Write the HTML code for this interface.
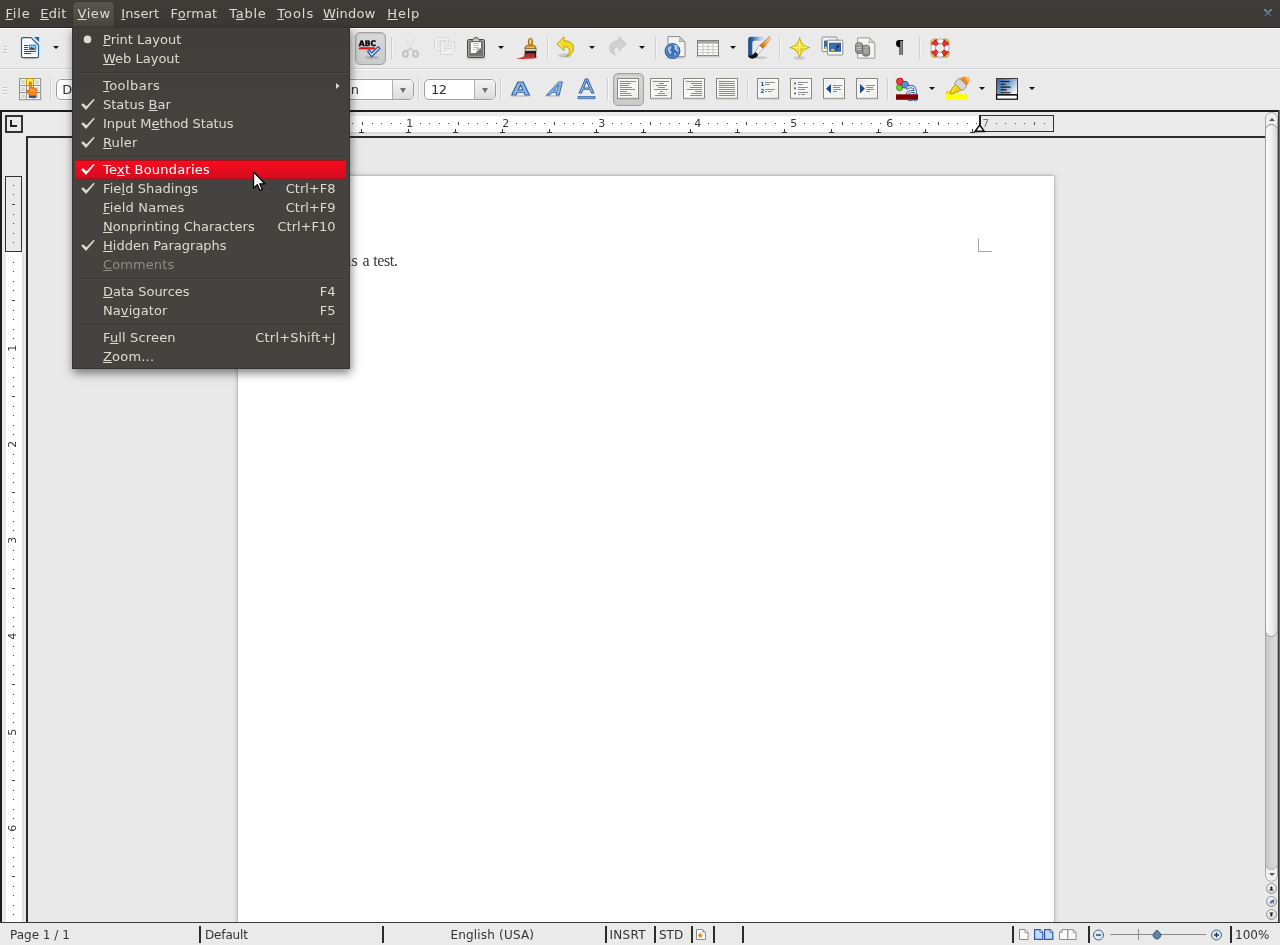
<!DOCTYPE html>
<html lang="en">
<head>
<meta charset="utf-8">
<title>Untitled 1 - LibreOffice Writer</title>
<style>
html,body{margin:0;padding:0;}
body{width:1280px;height:945px;overflow:hidden;position:relative;background:#eaeaea;font-family:"DejaVu Sans","Liberation Sans",sans-serif;font-size:13px;color:#2e2e2e;}
.abs{position:absolute;}
#menu,#menubar,#status,#tb1,#tb2,#page,#frame svg{will-change:transform;}
svg{position:absolute;overflow:visible;}
u{text-decoration:underline;text-underline-offset:0.500px;text-decoration-thickness:1px;}
/* menubar */
#menubar{position:absolute;left:0;top:0;width:1280px;height:28px;box-sizing:border-box;border-bottom:1px solid #2a2925;background:linear-gradient(#3f3e3a,#3c3b37 30%,#3b3a36);}
#menubar span.mi{position:absolute;top:6px;color:#dfdbd2;white-space:nowrap;line-height:16px;}
#viewsel{position:absolute;left:73px;top:2px;width:41px;height:26px;border-radius:4px 4px 0 0;background:linear-gradient(#56554f,#47463f);box-shadow:0 0 0 1px rgba(48,47,43,.45);}
/* toolbars */
#tb1{position:absolute;left:0;top:27px;width:1280px;height:42px;}
#tbtop{position:absolute;left:0;top:28px;width:1280px;height:1px;background:#fcfcfc;}
#tb2{position:absolute;left:0;top:69px;width:1280px;height:41px;}
#tbline{position:absolute;left:0;top:68px;width:1280px;height:1px;background:#d2d2d2;border-bottom:1px solid #f7f7f7;}
.grip{position:absolute;left:3px;width:4px;height:1px;background:#c3c3c3;box-shadow:0 1px 0 #fafafa;}
.tsep{position:absolute;width:1px;height:22px;background:#cfcfcf;box-shadow:1px 0 0 #f6f6f6;}
.pressed{position:absolute;width:31px;height:33px;box-sizing:border-box;border:1px solid #a3a3a3;border-radius:5px;background:linear-gradient(#d9d9d9,#cbcbcb);box-shadow:inset 0 1px 2px rgba(0,0,0,.12);}
.dd{position:absolute;width:0;height:0;margin-left:.4px;border-left:3.100px solid transparent;border-right:3.100px solid transparent;border-top:3.600px solid #111;}
.combo{position:absolute;top:79px;height:21px;box-sizing:border-box;border:1px solid #9e9e9e;border-radius:5px;background:#fff;box-shadow:0 0 0 1px #f1f1f1;}
.combo .btn{position:absolute;right:0;top:0;bottom:0;width:20px;border-left:1px solid #b0b0b0;background:linear-gradient(#f3f3f3,#dcdcdc);border-radius:0 4px 4px 0;}
.combo .btn:after{content:"";position:absolute;left:6.500px;top:8px;border-left:3.700px solid transparent;border-right:3.700px solid transparent;border-top:5px solid #707070;}
.combo .tx{position:absolute;left:6px;top:2px;line-height:16px;color:#333;white-space:nowrap;}
/* doc frame */
#frame{position:absolute;left:0;top:110px;width:1280px;height:813px;background:#eaeaea;}
#frame .bt{position:absolute;left:0;top:0;width:1280px;height:2px;background:#1c1c1c;}
#frame .bl{position:absolute;left:0;top:0;width:2px;height:812px;background:#1c1c1c;}
#frame .br{position:absolute;left:1278px;top:0;width:2px;height:813px;background:linear-gradient(90deg,#3a3a3a 50%,#6e6e6e 50%);}
#frame .bb{position:absolute;left:0;top:812px;width:1280px;height:1px;background:#3a3a3a;}
#view{position:absolute;left:26px;top:26px;width:1239px;height:786px;background:#e9e9e9;border-left:2px solid #2b2b2b;border-top:2px solid #2b2b2b;box-sizing:border-box;overflow:hidden;}
#page{position:absolute;left:210px;top:38px;width:816px;height:1056px;background:#fff;box-shadow:0 0 0 1px rgba(0,0,0,.08),0 0 5px rgba(0,0,0,.28);}
#doctext{position:absolute;left:75px;top:76px;font-family:"Liberation Serif",serif;font-size:16px;line-height:18px;color:#383838;white-space:nowrap;}
/* status bar */
#status{position:absolute;left:0;top:923px;width:1280px;height:22px;background:#eaeaea;font-size:12px;}
#status .t{position:absolute;top:5px;line-height:15px;color:#333;white-space:nowrap;}
#status .sep{position:absolute;top:3px;width:2px;height:17px;background:#2b2b2b;}
/* popup menu */
#menu{position:absolute;left:72px;top:27px;width:278px;height:342px;background:linear-gradient(#413f3b,#444340 30%,#444340);box-shadow:1px 4px 9px rgba(0,0,0,.5), 0 0 0 1px rgba(44,43,40,.6) inset;color:#dfdbd2;}
#menu .it{position:absolute;left:3px;width:271px;height:19px;line-height:19px;white-space:nowrap;}
#menu .it .l{position:absolute;left:28px;top:0;}
#menu .it .r{position:absolute;right:10.500px;top:0;}
#menu .it.dis{color:#8d8b85;}
#menu .it.hl{background:linear-gradient(#fb0a1d,#d30d20);box-shadow:0 1px 0 #a8121f inset, 0 -1px 0 #b00d1d inset;color:#fff;}
#menu .sepm{position:absolute;left:3px;width:272px;height:1px;background:#3a3935;border-bottom:1px solid #4d4c47;}
#menu svg.ck{left:6px;top:4px;}
</style>
</head>
<body>

<div id="tbtop"></div>
<div id="tb1">
  <div class="grip" style="top:19px"></div><div class="grip" style="top:22px"></div><div class="grip" style="top:25px"></div>
  <!-- new writer document -->
  <svg style="left:21px;top:10px" width="19" height="22" viewBox="0 0 19 22">
    <ellipse cx="9.500" cy="21.400" rx="6" ry="1" fill="#5a3a2a" opacity=".14"/>
    <path d="M1.700 .6h8.300l7.500 7.400v11.400a1.200 1.200 0 0 1-1.200 1.200H1.700a1.200 1.200 0 0 1-1.200-1.200V1.800A1.200 1.200 0 0 1 1.700 .6z" fill="#fdfdfd" stroke="#18659d" stroke-width="1.200" stroke-linejoin="round"/>
    <path d="M13.100 0H18.100V4.900z" fill="#1b6aa3"/>
    <path d="M3 8.500h3.900M3 10.500h3.900M3 12.500h3.900M3 14.500h11.900M3 16.500h6.900" stroke="#12548a" stroke-width="1.100"/>
    <path d="M9.900 16.500h5" stroke="#d9dcde" stroke-width="1.100"/>
    <rect x="8.300" y="8.200" width="6.500" height="4.500" fill="#9fd6f7" stroke="#1a80d0" stroke-width="1.100"/>
    <path d="M9 12.200l1.300-2.600.8 1.400 1-.8 1.900 2z" fill="#4a3426"/>
  </svg>
  <div class="dd" style="left:53px;top:19px"></div>
  <!-- autospellcheck pressed -->
  <div class="pressed" style="left:355px;top:5px"></div>
  <svg style="left:358px;top:11px" width="25" height="22" viewBox="0 0 25 22">
    <ellipse cx="14" cy="19.5" rx="7" ry="1.6" fill="#000" opacity=".15"/>
    <text x="0.8" y="7.700" font-family="DejaVu Sans, Liberation Sans, sans-serif" font-weight="bold" font-size="7.700" fill="#000" stroke="#000" stroke-width=".35" textLength="17.200" lengthAdjust="spacingAndGlyphs">ABC</text>
    <path d="M1 9.600l1 1.400 1-1.400 1 1.400 1-1.400 1 1.400 1-1.400 1 1.400 1-1.400 1 1.400 1-1.400 1 1.400 1-1.400 1 1.400 1-1.400 1 1.400 1-1.400" fill="none" stroke="#e01010" stroke-width="1.300"/>
    <path d="M9.6 13.4l1.8-1.6 2.2 3.2 6.6-6.4 1.8 1.8-8.4 8.4z" fill="#c9dcf3" stroke="#1c4f9f" stroke-width="1.1" stroke-linejoin="round"/>
  </svg>
  <div class="tsep" style="left:391px;top:10px"></div>
  <!-- cut disabled -->
  <svg style="left:401px;top:9px" width="19" height="22" viewBox="0 0 19 22">
    <path d="M4.500 1l5 11.500M14.500 1l-5 11.500" fill="none" stroke="#dadada" stroke-width="1"/>
    <path d="M6.300 14.800l3.200-2.300 3.200 2.300" fill="none" stroke="#c9c9c9" stroke-width="1.600"/>
    <g fill="none" stroke="#c2c2c2" stroke-width="2">
      <ellipse cx="4.400" cy="17.900" rx="2.400" ry="2.900"/><ellipse cx="14.500" cy="17.900" rx="2.400" ry="2.900"/>
    </g>
  </svg>
  <!-- copy disabled -->
  <svg style="left:434px;top:10px" width="22" height="19" viewBox="0 0 22 19">
    <rect x=".5" y=".5" width="14" height="13" rx="1" fill="#efefef" stroke="#d6d6d6"/>
    <path d="M3 3.500h9M3 5.500h9M3 7.500h9M3 9.500h9" stroke="#dbdbdb"/>
    <path d="M6.5 4.8h14v9.2l-3.6 3.6H6.5z" fill="#f0f0f0" stroke="#d4d4d4" stroke-linejoin="round"/>
    <path d="M9 7.500h9M9 9.500h9M9 11.500h9M9 13.500h4" stroke="#d9d9d9"/>
  </svg>
  <!-- paste -->
  <svg style="left:466px;top:10px" width="20" height="23" viewBox="0 0 20 23">
    <defs><linearGradient id="gpb" x1="0" y1="0" x2="0" y2="1"><stop offset="0" stop-color="#8d8f8a"/><stop offset="1" stop-color="#5e605b"/></linearGradient>
    <linearGradient id="gpf" x1="0" y1="0" x2="1" y2="1"><stop offset="0" stop-color="#f2f2f0"/><stop offset=".6" stop-color="#9a9c97"/><stop offset="1" stop-color="#6a6c67"/></linearGradient></defs>
    <ellipse cx="10" cy="21.300" rx="10" ry="1.500" fill="#000" opacity=".13"/>
    <rect x="1.500" y="2.500" width="17" height="18" rx="1.700" fill="url(#gpb)" stroke="#454743" stroke-width="1"/>
    <rect x="2.600" y="3.600" width="14.800" height="15.800" rx=".6" fill="#72746f" stroke="#b7b9b3" stroke-width=".8"/>
    <path d="M4.800 4.700H15v6.800l-5 4.500H4.800z" fill="#fff"/>
    <path d="M10 11.500h5V16h-5z" fill="#6c6e69"/>
    <path d="M10 11.500h5L10 16z" fill="url(#gpf)"/>
    <path d="M7 6.500h5.800M7 8.500h5.800M7 10.500h5.800M7 12.500h1.700" stroke="#b3b3af" stroke-width=".9"/>
    <path d="M5.600 4.600c0-1.500 1.700-1.900 2.200-3c.3-.8.700-1.100 1.500-1.100h1.400c.8 0 1.200.3 1.500 1.100c.5 1.100 2.200 1.500 2.200 3z" fill="#babcb3" stroke="#454743" stroke-width=".9" stroke-linejoin="round"/>
    <path d="M7.400 3.700h5.200" stroke="#d6d7cf" stroke-width=".9"/>
  </svg>
  <div class="dd" style="left:498px;top:19px"></div>
  <!-- clone formatting brush -->
  <svg style="left:515px;top:10px" width="23" height="23" viewBox="0 0 23 23">
    <ellipse cx="17" cy="20.600" rx="6.500" ry="1.300" fill="#000" opacity=".12"/>
    <path d="M1 21.500c4.500-.6 7-1.300 8.600-2.600l11.600.6v1.200c-6 .9-14.500 1.700-20.200.8z" fill="#e01b24"/>
    <path d="M9.900 14h11.300v6.400l-11.800-.4z" fill="#161616"/>
    <path d="M9.700 17.200l1.200-1 .8 1 1.300-1.600 1 1.400 1.200-1.500 1 1.600 1.300-1.400 1 1.300 1.400-1.200.3 5.800-11.700-.3z" fill="#d5383d" opacity=".78"/>
    <rect x="10" y="11.300" width="11.100" height="2.700" fill="#dcded8" stroke="#4e4e4a" stroke-width=".7"/>
    <path d="M10.100 11.200c-.3-2.500 1.600-2.900 4-3.100h2.800c2.400.2 4.300.6 4 3.100z" fill="#d79a2f" stroke="#8f5902" stroke-width=".8" stroke-linejoin="round"/>
    <ellipse cx="15.500" cy="4.900" rx="2.200" ry="3.600" fill="#d79a2f" stroke="#8f5902" stroke-width=".8"/>
    <ellipse cx="15.500" cy="4.400" rx=".9" ry="2.400" fill="#f3d48a"/>
    <path d="M11.300 10.300h8.400" stroke="#f0c870" stroke-width=".9"/>
  </svg>
  <div class="tsep" style="left:547px;top:10px"></div>
  <!-- undo -->
  <svg style="left:556px;top:9px" width="19" height="22" viewBox="0 0 19 22">
    <ellipse cx="9" cy="19.6" rx="7" ry="2" fill="#000" opacity=".15"/>
    <path d="M8 .8L.9 8l7.100 6.600v-3.800c3.200-.4 5.400 1 5.400 4c0 2.200-1.400 4.200-4 5.800c5.400-1 8.200-4.600 8.200-8.400c0-4.400-3.600-7.600-9.600-7.400z" fill="#ecd928" stroke="#bf9f00" stroke-width="1" stroke-linejoin="round"/>
    <path d="M7.200 3.200L2.400 8l4.800 4.400" fill="none" stroke="#f8ee8a" stroke-width=".9"/>
  </svg>
  <div class="dd" style="left:589px;top:19px"></div>
  <!-- redo disabled -->
  <svg style="left:609px;top:9px" width="18" height="20" viewBox="0 0 18 20">
    <path d="M10 .8l7.100 7.200-7.100 6.600v-3.800c-3.200-.4-5.400 1-5.400 4c0 1.600.6 2.800 1.800 4c-3.600-1-5.600-3.600-5.600-6.600c0-4.400 3.400-7.600 9.200-7.400z" fill="#d2d2d2" stroke="#c3c3c3" stroke-width="1" stroke-linejoin="round"/>
  </svg>
  <div class="dd" style="left:639px;top:19px"></div>
  <div class="tsep" style="left:655px;top:10px"></div>
  <!-- hyperlink -->
  <svg style="left:664px;top:9px" width="22" height="23" viewBox="0 0 22 23">
    <ellipse cx="11" cy="22" rx="10" ry="1.2" fill="#000" opacity=".15"/>
    <path d="M4 .6h11.600l5.400 5.400v14.600H4z" fill="#f4f4f2" stroke="#8d8f8a" stroke-width="1" stroke-linejoin="round"/>
    <path d="M15.600 .6c.6 2 .2 3.800-.4 5.200c1.600-.6 4-.6 5.800.2z" fill="#d0d0cc" stroke="#8d8f8a" stroke-width=".8" stroke-linejoin="round"/>
    <circle cx="8.500" cy="15" r="7.400" fill="#3b70b8" stroke="#204a87" stroke-width="1"/>
    <circle cx="8.500" cy="15" r="6.400" fill="none" stroke="#7ea5dc" stroke-width=".8"/>
    <path transform="translate(.2 .7)" d="M3.600 11.400c1-1.600 2.600-2 3.600-1.400c.6 1-.4 2-1.400 2.600c-.2 1.400 1.400 1.800 1.600 3.200c-.6 1.600-1.400 2-2.200 1.200c-.2-1.600-1.800-2.800-1.600-5.600zM9.600 8.600c1.400-.6 3.400-.2 4.400 1c-.8.600-1.400 1.400-1 2.400c1 .4 1.600 1.400 1.200 2.600c-1 .8-2 .2-2.400-1c-1.200-.4-2-1.200-1.600-2.400c.6-.8 0-1.800-.6-2.600zM10.400 16.600c.8-.4 1.600 0 1.600 1c-.4 1-1.200 1.400-2 1c-.2-.8 0-1.600.4-2z" fill="#c6d7ef" opacity=".85"/>
  </svg>
  <!-- table -->
  <svg style="left:696px;top:12px" width="24" height="19" viewBox="0 0 24 19">
    <rect x="0" y="17" width="24" height="1.400" fill="#000" opacity=".13"/>
    <rect x="1.500" y="1.500" width="21" height="15" fill="#fbfbfa" stroke="#7f817c" stroke-width="1"/>
    <rect x="2" y="2" width="20" height="2.600" fill="#a4a6a0"/>
    <path d="M2 7.600h20M2 10.600h20M2 13.600h20M7 4.600v12M12 4.600v12M17 4.600v12" stroke="#c6c8c2" stroke-width="1"/>
  </svg>
  <div class="dd" style="left:730px;top:19px"></div>
  <!-- show draw functions -->
  <svg style="left:747px;top:9px" width="26" height="24" viewBox="0 0 26 24">
    <defs><linearGradient id="gdf" x1="0" y1="0" x2="1" y2="0"><stop offset="0" stop-color="#1d4482"/><stop offset=".22" stop-color="#2f62a8"/><stop offset=".5" stop-color="#6f9bd0" stop-opacity=".85"/><stop offset="1" stop-color="#c9d9ec" stop-opacity="0"/></linearGradient>
    <linearGradient id="gdh" x1="0" y1="1" x2="1" y2="0"><stop offset="0" stop-color="#b4560c"/><stop offset=".35" stop-color="#e8872a"/><stop offset="1" stop-color="#f4b070" stop-opacity=".15"/></linearGradient></defs>
    <ellipse cx="14" cy="21.600" rx="6" ry="1.100" fill="#000" opacity=".16"/>
    <path d="M3.800 .8H19.500V5H7.200a1.600 1.600 0 0 0-1.600 1.600V21H1.200V3.400A2.600 2.600 0 0 1 3.800 .8z" fill="url(#gdf)"/>
    <path d="M5.800 18V6.800a1.700 1.700 0 0 1 1.700-1.700H17" fill="none" stroke="#f6f6f6" stroke-width=".7" opacity=".8"/>
    <path d="M12.300 9.700L23.600 -.4 24.800 3 16.200 12.800z" fill="url(#gdh)"/>
    <path d="M12.600 9.600L23 .2" stroke="#8a4a12" stroke-width=".7" opacity=".7" fill="none"/>
    <path d="M8.300 16L12.300 9.500 16.200 12.700 11 18.600z" fill="#fbfbfb" stroke="#8a8a86" stroke-width=".6" stroke-linejoin="round"/>
    <path d="M10 15.600l3.200-4M11.400 16.600l3.200-4" stroke="#c9c9c5" stroke-width=".5"/>
    <path d="M8.300 16l2.800 2.600c-.4 2.800-3.600 4.400-6.800 4c-1.800-.3-2.900-1.400-3-3c2.600.6 5-.8 7-3.600z" fill="#141414"/>
  </svg>
  <div class="tsep" style="left:779px;top:10px"></div>
  <!-- navigator star -->
  <svg style="left:789px;top:9.800px" width="22" height="23" viewBox="0 0 22 23">
    <ellipse cx="10.600" cy="21" rx="6" ry="1.600" fill="#000" opacity=".14"/>
    <path d="M10.600 .7C11.900 6.600 14.600 9.300 20.500 10.600C14.600 11.900 11.900 14.600 10.600 20.500C9.300 14.600 6.600 11.900 .7 10.600C6.600 9.300 9.300 6.600 10.600 .7z" fill="#f2e43c" stroke="#c4a000" stroke-width="1" stroke-linejoin="round"/>
    <path d="M10.600 3.600v14M3.600 10.600h14" stroke="#fdf8b0" stroke-width="1"/>
    <path d="M10.600 10.600l5 0-5 5z" fill="#d9c21a" opacity=".6"/>
  </svg>
  <!-- gallery -->
  <svg style="left:821px;top:9px" width="23" height="20" viewBox="0 0 23 20">
    <rect x="1" y="1" width="15" height="14.600" rx="1" fill="#f3f3f1" stroke="#8d8f8a" stroke-width="1"/>
    <rect x="3" y="4.600" width="5" height="8" fill="#3465a4"/>
    <path d="M3 12.600l1.800-2.600 1.600 2.600z" fill="#f4d21f"/>
    <rect x="6.400" y="4.200" width="15.400" height="14.800" rx="1" fill="#f5f5f3" stroke="#8d8f8a" stroke-width="1"/>
    <rect x="8.600" y="7.200" width="11" height="8" fill="#3b6fb6" stroke="#204a87" stroke-width=".8"/>
    <path d="M9.400 14.800c1.200-2.200 2.800-2.600 4.600 0z" fill="#f4d21f"/>
    <path d="M14.200 10.600l2.600.6M16.400 9l.8 2.600M16.800 11.400l-2 3.200M18.200 8.600l-1 2.800" stroke="#14233a" stroke-width=".9" fill="none"/>
  </svg>
  <!-- data sources -->
  <svg style="left:855px;top:10px" width="21" height="23" viewBox="0 0 21 23">
    <path d="M2.600 .8h11.600l5.600 5.600v14.800H2.600z" fill="#f3f3f1" stroke="#9a9c97" stroke-width="1" stroke-linejoin="round"/>
    <path d="M14.200 .8c.6 2 .2 3.800-.4 5.200c1.600-.6 4-.6 5.800.2z" fill="#d9d9d5" stroke="#9a9c97" stroke-width=".8" stroke-linejoin="round"/>
    <g fill="#8f918c" stroke="#5c5e59" stroke-width=".8">
      <path d="M.6 7.600c0-2.600 7-2.600 7 0v7c0 2.600-7 2.600-7 0z"/>
      <path d="M7.400 10.200c0-2.600 7.200-2.600 7.200 0v7c0 2.600-7.200 2.600-7.200 0z"/>
    </g>
    <path d="M1.600 10.400h5M1.600 12.600h5M8.600 13h5M8.600 15.200h5" stroke="#c8cac4" stroke-width=".9"/>
    <ellipse cx="4.100" cy="7.400" rx="2.800" ry="1" fill="#a9aba6"/><ellipse cx="11" cy="10" rx="2.900" ry="1" fill="#a9aba6"/>
  </svg>
  <!-- nonprinting characters -->
  <svg style="left:895px;top:13px" width="8" height="17" viewBox="0 0 8 17">
    <text x="1" y="13.400" font-family="Liberation Serif, DejaVu Serif, serif" font-size="19" fill="#000" stroke="#000" stroke-width=".25" textLength="7.400" lengthAdjust="spacingAndGlyphs">¶</text>
  </svg>
  <div class="tsep" style="left:919px;top:10px"></div>
  <!-- help lifebuoy -->
  <svg style="left:930px;top:11px" width="20" height="20" viewBox="0 0 20 20">
    <ellipse cx="11" cy="19.300" rx="8" ry="1" fill="#000" opacity=".12"/>
    <g fill="none" stroke="#c4a000" stroke-width="1.300"><path d="M.8 6.400C.8 2.800 2.800 .8 6.400 .8"/><path d="M13.600 .8c3.600 0 5.600 2 5.600 5.600"/><path d="M19.200 13.600c0 3.600-2 5.600-5.600 5.600"/><path d="M6.400 19.200c-3.600 0-5.600-2-5.600-5.600"/></g>
    <circle cx="10" cy="10" r="9.100" fill="#fdfdfd" stroke="#a9a9a9" stroke-width=".9"/>
    <circle cx="10" cy="10" r="6.900" fill="none" stroke="#ee2b33" stroke-width="4.300" stroke-dasharray="5.420 5.420" stroke-dashoffset="-2.710"/>
    <circle cx="10" cy="10" r="9.100" fill="none" stroke="#a40000" stroke-width=".9" stroke-dasharray="7.147 7.147" stroke-dashoffset="-3.570"/>
    <circle cx="10" cy="10" r="4.500" fill="#eaeaea" stroke="#9a9a9a" stroke-width=".9"/>
    <circle cx="10" cy="10" r="4.500" fill="none" stroke="#a40000" stroke-width=".9" stroke-dasharray="3.534 3.534" stroke-dashoffset="-1.767"/>
  </svg>
</div>

<div id="tbline"></div>
<div id="tb2">
  <div class="grip" style="top:18px"></div><div class="grip" style="top:21px"></div><div class="grip" style="top:24px"></div>
  <!-- styles and formatting -->
  <svg style="left:19px;top:9px" width="22.200" height="22.200" viewBox="0 0 22.600 22.600">
    <rect x=".5" y=".5" width="21.600" height="21.600" fill="#f4f4f2" stroke="#8c8e89" stroke-width="1"/>
    <path d="M7.600 .5v21.600M14.800 .5v21.600M.5 7.600h21.600M.5 14.800h21.600" stroke="#8c8e89" stroke-width="1"/>
    <g fill="#d3d7cf"><rect x="2.200" y="2.200" width="3.800" height="3.800"/><rect x="16.400" y="2.200" width="3.800" height="3.800"/><rect x="2.200" y="9.400" width="3.800" height="3.800"/><rect x="16.400" y="9.400" width="3.800" height="3.800"/><rect x="2.200" y="16.600" width="3.800" height="3.800"/><rect x="16.400" y="16.600" width="3.800" height="3.800"/></g>
    <rect x="7.600" y=".5" width="7.200" height="7.200" fill="#fce94f" stroke="#c4a000" stroke-width="1"/>
    <rect x="10" y="17.600" width="7.600" height="2.600" fill="#204a87"/>
    <path d="M10.600 4.800c0-1.400 2-1.400 2 0v5.200c.4-.8 1.800-.6 1.800.4c.4-.8 1.800-.4 1.800.6c.6-.6 1.800-.2 1.800.8v3.600c0 1.600-1 2.600-2.400 2.600h-3.400c-1.200 0-2-.6-2.600-1.600l-1.600-3c-.4-1 .8-1.800 1.600-.8l1 1.200z" fill="#f5891f" stroke="#ce5c00" stroke-width=".7" stroke-linejoin="round"/>
    <path d="M12.600 11v3M14.400 11.400v2.600M16.200 12v2" stroke="#fcbf7a" stroke-width=".7"/>
  </svg>
  <div class="tsep" style="left:50px;top:9px"></div>
  <div class="combo" style="left:56px;top:10px;width:160px"><span class="tx" style="left:5.200px">Default</span></div>
  <div class="combo" style="left:230px;top:10px;width:184px"><span class="tx" style="left:auto;right:54px">Liberation Serif;Times New Roman</span><span class="btn"></span></div>
  <div class="tsep" style="left:418px;top:9px"></div>
  <div class="combo" style="left:424px;top:10px;width:72px"><span class="tx" style="letter-spacing:-.6px">12</span><span class="btn"></span></div>
  <div class="tsep" style="left:500px;top:9px"></div>
  <!-- bold / italic / underline -->
  <svg style="left:509px;top:9px" width="23" height="20" viewBox="0 0 23 20">
    <ellipse cx="11.600" cy="18" rx="10" ry="1.100" fill="#000" opacity=".13"/>
    <text x="11.500" y="17.400" text-anchor="middle" font-family="DejaVu Sans, Liberation Sans, sans-serif" font-weight="bold" font-size="18" fill="#8eb4e3" stroke="#3465a4" stroke-width=".9" transform="translate(11.500 0) scale(1.300 1) translate(-11.500 0)">A</text>
  </svg>
  <svg style="left:543px;top:9px" width="23" height="20" viewBox="0 0 23 20">
    <ellipse cx="9.600" cy="18" rx="8" ry="1.100" fill="#000" opacity=".13"/>
    <text x="9.500" y="17.400" text-anchor="middle" font-family="DejaVu Sans, Liberation Sans, sans-serif" font-weight="bold" font-size="18" fill="#8eb4e3" stroke="#3465a4" stroke-width=".9" transform="translate(10 17.400) skewX(-30) scale(.92 1) translate(-9.500 -17.400)">A</text>
  </svg>
  <svg style="left:577px;top:8px" width="19" height="23" viewBox="0 0 19 23">
    <text x="9.500" y="16.400" text-anchor="middle" font-family="DejaVu Sans, Liberation Sans, sans-serif" font-size="20" fill="#a9c6ea" stroke="#3465a4" stroke-width=".9" transform="translate(9.500 0) scale(1.100 1) translate(-9.500 0)">A</text>
    <rect x="1" y="19.400" width="17" height="2.400" fill="#729fcf" stroke="#3465a4" stroke-width=".7"/>
  </svg>
  <div class="tsep" style="left:607px;top:9px"></div>
  <div class="pressed" style="left:613px;top:4px"></div>
  <!-- align left / center / right / justify -->
  <svg style="left:617px;top:9px" width="23" height="22" viewBox="0 0 23 22"><use href="#paper"/>
    <path d="M3 3.500h16M3 5.500h11M3 7.500h9M3 9.500h12M3 11.500h15M3 13.500h7M3 15.500h11M3 17.500h12" stroke="#8b8d88" stroke-width="1"/></svg>
  <svg style="left:650px;top:9px" width="23" height="22" viewBox="0 0 23 22"><use href="#paper"/>
    <path d="M3 3.500h16M9 5.500h5M6 7.500h11M8 9.500h7M4 11.500h14M10 13.500h3M8 15.500h7M5 17.500h12" stroke="#8b8d88" stroke-width="1"/></svg>
  <svg style="left:683px;top:9px" width="23" height="22" viewBox="0 0 23 22"><use href="#paper"/>
    <path d="M3 3.500h16M8 5.500h11M10 7.500h9M7 9.500h12M4 11.500h15M12 13.500h7M8 15.500h11M7 17.500h12" stroke="#8b8d88" stroke-width="1"/></svg>
  <svg style="left:716px;top:9px" width="23" height="22" viewBox="0 0 23 22"><use href="#paper"/>
    <path d="M3 3.500h16M3 5.500h16M3 7.500h16M3 9.500h16M3 11.500h16M3 13.500h16M3 15.500h16M3 17.500h16" stroke="#8b8d88" stroke-width="1"/></svg>
  <div class="tsep" style="left:747px;top:9px"></div>
  <!-- numbering / bullets / outdent / indent -->
  <svg style="left:757px;top:9px" width="23" height="22" viewBox="0 0 23 22"><use href="#paper"/>
    <path d="M8 4.500h10M8 6.500h5M8 11.500h10M8 13.500h2M11 13.500h4" stroke="#8b8d88" stroke-width="1"/>
    <text x="3.400" y="8" font-family="DejaVu Sans, Liberation Sans, sans-serif" font-weight="bold" font-size="5.600" fill="#204a87">1</text>
    <text x="3.400" y="15" font-family="DejaVu Sans, Liberation Sans, sans-serif" font-weight="bold" font-size="5.600" fill="#204a87">2</text></svg>
  <svg style="left:790px;top:9px" width="23" height="22" viewBox="0 0 23 22"><use href="#paper"/>
    <path d="M8 4.500h10M8 6.500h5M8 9.500h10M8 11.500h7M8 14.500h10M8 16.500h2M11 16.500h4" stroke="#8b8d88" stroke-width="1"/>
    <rect x="4" y="4.400" width="2" height="2" fill="#777975"/><rect x="4" y="9.400" width="2" height="2" fill="#777975"/><rect x="4" y="14.400" width="2" height="2" fill="#777975"/></svg>
  <svg style="left:823px;top:9px" width="23" height="22" viewBox="0 0 23 22"><use href="#paper"/>
    <path d="M10 7.500h9M10 9.500h7M10 11.500h8M10 13.500h4" stroke="#8b8d88" stroke-width="1"/>
    <path d="M8 6v9.400L3 10.700z" fill="#204a87"/></svg>
  <svg style="left:856px;top:9px" width="23" height="22" viewBox="0 0 23 22"><use href="#paper"/>
    <path d="M10 7.500h9M10 9.500h7M10 11.500h8M10 13.500h4" stroke="#8b8d88" stroke-width="1"/>
    <path d="M4 6v9.400L9 10.700z" fill="#204a87"/></svg>
  <div class="tsep" style="left:887px;top:9px"></div>
  <!-- font color -->
  <svg style="left:896px;top:8px" width="23" height="23" viewBox="0 0 23 23">
    <circle cx="3.600" cy="10.500" r="3.200" fill="#5fd12f" stroke="#3a9a12" stroke-width=".8"/>
    <circle cx="3.900" cy="4.500" r="3.400" fill="#ef2929" stroke="#b00a0a" stroke-width=".8"/>
    <circle cx="3.900" cy="4.500" r="1.900" fill="none" stroke="#f88" stroke-width=".6" opacity=".7"/>
    <circle cx="9" cy="7.700" r="3.400" fill="#4f86cc" stroke="#204a87" stroke-width=".8"/>
    <circle cx="9" cy="7.700" r="1.900" fill="none" stroke="#9cc0ee" stroke-width=".6" opacity=".7"/>
    <g transform="translate(8.800 22.800) scale(.92 1)"><text x="0" y="0" font-family="DejaVu Sans, Liberation Sans, sans-serif" font-weight="200" font-size="24" fill="#2f5f9f" stroke="#2f5f9f" stroke-width="2.300" stroke-linejoin="round">a</text><text x="0" y="0" font-family="DejaVu Sans, Liberation Sans, sans-serif" font-weight="200" font-size="24" fill="#e6eef8" stroke="#e6eef8" stroke-width=".3">a</text></g>
    <rect x="0" y="17.300" width="22" height="5.500" fill="#7f0000"/>
  </svg>
  <div class="dd" style="left:929px;top:18px"></div>
  <!-- highlighting -->
  <svg style="left:946px;top:7px" width="24" height="24" viewBox="0 0 24 24">
    <rect x="0" y="18.300" width="22" height="5.500" fill="#ffff00"/>
    <path d="M0 14.800h8l-2 3.600H0z" fill="#f2da2a"/>
    <path d="M13.400 2.800L17.600 .4 23.200 1.200 22.600 7l-3 3.600z" fill="#f58a1c"/>
    <path d="M17.600 .4l5.600.8-.6 5.800z" fill="#fbb45c"/>
    <path d="M11.600 3.600c.8-1 2-1.200 3-.4l5.400 5.200c.8.800.8 2 0 2.800l-2.600 2.600c-.8.800-2 .8-2.800 0L9.200 8.600c-.8-.8-.6-2 0-2.800z" fill="#d5d7d2" stroke="#7d7f7a" stroke-width=".8"/>
    <path d="M9.600 8.400l5.400 5.400c-2.600 2-6.400 3.600-9.600 4.200c-1.200-.2-1.400-1-1-2c1-2.800 2.800-5.600 5.200-7.600z" fill="#edd400" stroke="#a88a00" stroke-width=".8" stroke-linejoin="round"/>
    <path d="M9.800 10.400c-1.800 1.600-3 3.600-3.800 5.600" stroke="#fbf08c" stroke-width="1" fill="none"/>
  </svg>
  <div class="dd" style="left:979px;top:18px"></div>
  <!-- background color -->
  <svg style="left:996px;top:9px" width="23" height="22" viewBox="0 0 23 22">
    <defs><linearGradient id="gbg" x1="0" y1="0" x2="1" y2=".6"><stop offset="0" stop-color="#2d5ea3"/><stop offset=".5" stop-color="#6c93c6"/><stop offset="1" stop-color="#eef2f7"/></linearGradient></defs>
    <rect x=".5" y=".5" width="21" height="16" fill="url(#gbg)" stroke="#3a3c38" stroke-width="1"/>
    <path d="M4.600 3.500h9M4.600 6.300h5M4.600 9.100h10M4.600 11.900h6M4.600 14.700h10" stroke="#16191e" stroke-width="1.100"/>
    <rect x=".6" y="17" width="20.800" height="4.200" fill="#fff" stroke="#000" stroke-width="1.200"/>
  </svg>
  <div class="dd" style="left:1029px;top:18px"></div>
</div>
<svg width="0" height="0" style="left:0;top:0"><defs>
  <linearGradient id="gpaper" x1="0" y1="0" x2="1" y2="1"><stop offset="0" stop-color="#e4e6e1"/><stop offset=".5" stop-color="#fafaf9"/><stop offset="1" stop-color="#e9eae6"/></linearGradient>
  <g id="paper"><rect x="0" y="20.200" width="22.600" height="1.300" fill="#000" opacity=".16"/><rect x=".5" y=".5" width="21" height="19.600" fill="url(#gpaper)" stroke="#85877f" stroke-width="1"/><rect x="1.500" y="1.500" width="19" height="17.600" fill="none" stroke="#fff" stroke-width="1" opacity=".8"/></g>
</defs></svg>

<div id="frame">
<div class="bt"></div><div class="bl"></div><div class="br"></div><div class="bb"></div>
<div class="abs" style="left:5px;top:5px;width:18px;height:18px;box-sizing:border-box;border:2px solid #333"></div>
<div class="abs" style="left:10px;top:10px;width:2px;height:7px;background:#222"></div><div class="abs" style="left:10px;top:15px;width:7px;height:2px;background:#222"></div>
<svg id="hruler" style="left:0;top:0" width="1265" height="28" viewBox="0 110 1265 28" font-family="DejaVu Sans, Liberation Sans, sans-serif" font-size="11"><rect x="314" y="116" width="665" height="16" fill="#fff"/><rect x="314" y="132" width="665" height="2" fill="#dcdcdc"/><rect x="237.500" y="115.500" width="77" height="16" fill="#eaeaea" stroke="#333" stroke-width="1"/><rect x="979.500" y="115.500" width="74" height="16" fill="#eaeaea" stroke="#333" stroke-width="1"/><rect x="247" y="123" width="1" height="1" fill="#555"/><rect x="256" y="123" width="1" height="1" fill="#555"/><rect x="266" y="122" width="1" height="3" fill="#555"/><rect x="276" y="123" width="1" height="1" fill="#555"/><rect x="285" y="123" width="1" height="1" fill="#555"/><rect x="295" y="123" width="1" height="1" fill="#555"/><rect x="304" y="123" width="1" height="1" fill="#555"/><rect x="324" y="123" width="1" height="1" fill="#444"/><rect x="333" y="123" width="1" height="1" fill="#444"/><rect x="343" y="123" width="1" height="1" fill="#444"/><rect x="352" y="123" width="1" height="1" fill="#444"/><rect x="362" y="122" width="1" height="3" fill="#444"/><rect x="372" y="123" width="1" height="1" fill="#444"/><rect x="381" y="123" width="1" height="1" fill="#444"/><rect x="391" y="123" width="1" height="1" fill="#444"/><rect x="400" y="123" width="1" height="1" fill="#444"/><text x="409.7" y="126.600" text-anchor="middle" fill="#3a3a3a">1</text><rect x="420" y="123" width="1" height="1" fill="#444"/><rect x="429" y="123" width="1" height="1" fill="#444"/><rect x="439" y="123" width="1" height="1" fill="#444"/><rect x="448" y="123" width="1" height="1" fill="#444"/><rect x="458" y="122" width="1" height="3" fill="#444"/><rect x="468" y="123" width="1" height="1" fill="#444"/><rect x="477" y="123" width="1" height="1" fill="#444"/><rect x="487" y="123" width="1" height="1" fill="#444"/><rect x="496" y="123" width="1" height="1" fill="#444"/><text x="505.7" y="126.600" text-anchor="middle" fill="#3a3a3a">2</text><rect x="516" y="123" width="1" height="1" fill="#444"/><rect x="525" y="123" width="1" height="1" fill="#444"/><rect x="535" y="123" width="1" height="1" fill="#444"/><rect x="544" y="123" width="1" height="1" fill="#444"/><rect x="554" y="122" width="1" height="3" fill="#444"/><rect x="564" y="123" width="1" height="1" fill="#444"/><rect x="573" y="123" width="1" height="1" fill="#444"/><rect x="583" y="123" width="1" height="1" fill="#444"/><rect x="592" y="123" width="1" height="1" fill="#444"/><text x="601.7" y="126.600" text-anchor="middle" fill="#3a3a3a">3</text><rect x="612" y="123" width="1" height="1" fill="#444"/><rect x="621" y="123" width="1" height="1" fill="#444"/><rect x="631" y="123" width="1" height="1" fill="#444"/><rect x="640" y="123" width="1" height="1" fill="#444"/><rect x="650" y="122" width="1" height="3" fill="#444"/><rect x="660" y="123" width="1" height="1" fill="#444"/><rect x="669" y="123" width="1" height="1" fill="#444"/><rect x="679" y="123" width="1" height="1" fill="#444"/><rect x="688" y="123" width="1" height="1" fill="#444"/><text x="697.7" y="126.600" text-anchor="middle" fill="#3a3a3a">4</text><rect x="708" y="123" width="1" height="1" fill="#444"/><rect x="717" y="123" width="1" height="1" fill="#444"/><rect x="727" y="123" width="1" height="1" fill="#444"/><rect x="736" y="123" width="1" height="1" fill="#444"/><rect x="746" y="122" width="1" height="3" fill="#444"/><rect x="756" y="123" width="1" height="1" fill="#444"/><rect x="765" y="123" width="1" height="1" fill="#444"/><rect x="775" y="123" width="1" height="1" fill="#444"/><rect x="784" y="123" width="1" height="1" fill="#444"/><text x="793.7" y="126.600" text-anchor="middle" fill="#3a3a3a">5</text><rect x="804" y="123" width="1" height="1" fill="#444"/><rect x="813" y="123" width="1" height="1" fill="#444"/><rect x="823" y="123" width="1" height="1" fill="#444"/><rect x="832" y="123" width="1" height="1" fill="#444"/><rect x="842" y="122" width="1" height="3" fill="#444"/><rect x="852" y="123" width="1" height="1" fill="#444"/><rect x="861" y="123" width="1" height="1" fill="#444"/><rect x="871" y="123" width="1" height="1" fill="#444"/><rect x="880" y="123" width="1" height="1" fill="#444"/><text x="889.7" y="126.600" text-anchor="middle" fill="#3a3a3a">6</text><rect x="900" y="123" width="1" height="1" fill="#444"/><rect x="909" y="123" width="1" height="1" fill="#444"/><rect x="919" y="123" width="1" height="1" fill="#444"/><rect x="928" y="123" width="1" height="1" fill="#444"/><rect x="938" y="122" width="1" height="3" fill="#444"/><rect x="948" y="123" width="1" height="1" fill="#444"/><rect x="957" y="123" width="1" height="1" fill="#444"/><rect x="967" y="123" width="1" height="1" fill="#444"/><rect x="976" y="123" width="1" height="1" fill="#444"/><text x="985.7" y="126.600" text-anchor="middle" fill="#777">7</text><rect x="996" y="123" width="1" height="1" fill="#555"/><rect x="1005" y="123" width="1" height="1" fill="#555"/><rect x="1015" y="123" width="1" height="1" fill="#555"/><rect x="1024" y="123" width="1" height="1" fill="#555"/><rect x="1034" y="122" width="1" height="3" fill="#555"/><rect x="1044" y="123" width="1" height="1" fill="#555"/><path d="M361.5 129v3M359 132.500h5" stroke="#333" stroke-width="1" fill="none"/><path d="M408.5 129v3M406 132.500h5" stroke="#333" stroke-width="1" fill="none"/><path d="M455.5 129v3M453 132.500h5" stroke="#333" stroke-width="1" fill="none"/><path d="M502.5 129v3M500 132.500h5" stroke="#333" stroke-width="1" fill="none"/><path d="M549.5 129v3M547 132.500h5" stroke="#333" stroke-width="1" fill="none"/><path d="M596.5 129v3M594 132.500h5" stroke="#333" stroke-width="1" fill="none"/><path d="M643.5 129v3M641 132.500h5" stroke="#333" stroke-width="1" fill="none"/><path d="M690.5 129v3M688 132.500h5" stroke="#333" stroke-width="1" fill="none"/><path d="M737.5 129v3M735 132.500h5" stroke="#333" stroke-width="1" fill="none"/><path d="M784.5 129v3M782 132.500h5" stroke="#333" stroke-width="1" fill="none"/><path d="M831.5 129v3M829 132.500h5" stroke="#333" stroke-width="1" fill="none"/><path d="M878.5 129v3M876 132.500h5" stroke="#333" stroke-width="1" fill="none"/><path d="M925.5 129v3M923 132.500h5" stroke="#333" stroke-width="1" fill="none"/><path d="M972.5 129v3M970 132.500h5" stroke="#333" stroke-width="1" fill="none"/><rect x="979" y="115" width="2" height="10" fill="#222"/><path d="M979.700 125L984.300 131.400H975.100z" fill="#fff" stroke="#111" stroke-width="1.600" stroke-linejoin="miter"/></svg>
<svg id="vruler" style="left:0;top:0" width="28" height="812" viewBox="0 110 28 812" font-family="DejaVu Sans, Liberation Sans, sans-serif" font-size="11"><rect x="6" y="252" width="16" height="670" fill="#fff"/><rect x="22" y="252" width="2" height="670" fill="#e2e2e2"/><rect x="5.500" y="176.500" width="16" height="75" fill="#eaeaea" stroke="#333" stroke-width="1"/><rect x="13" y="185" width="1" height="1" fill="#444"/><rect x="13" y="194" width="1" height="1" fill="#444"/><rect x="12" y="204" width="3" height="1" fill="#444"/><rect x="13" y="214" width="1" height="1" fill="#444"/><rect x="13" y="223" width="1" height="1" fill="#444"/><rect x="13" y="233" width="1" height="1" fill="#444"/><rect x="13" y="242" width="1" height="1" fill="#444"/><rect x="13" y="262" width="1" height="1" fill="#444"/><rect x="13" y="271" width="1" height="1" fill="#444"/><rect x="13" y="281" width="1" height="1" fill="#444"/><rect x="13" y="290" width="1" height="1" fill="#444"/><rect x="12" y="300" width="3" height="1" fill="#444"/><rect x="13" y="310" width="1" height="1" fill="#444"/><rect x="13" y="319" width="1" height="1" fill="#444"/><rect x="13" y="329" width="1" height="1" fill="#444"/><rect x="13" y="338" width="1" height="1" fill="#444"/><text transform="translate(16.300 348.3) rotate(-90)" text-anchor="middle" fill="#3a3a3a">1</text><rect x="13" y="358" width="1" height="1" fill="#444"/><rect x="13" y="367" width="1" height="1" fill="#444"/><rect x="13" y="377" width="1" height="1" fill="#444"/><rect x="13" y="386" width="1" height="1" fill="#444"/><rect x="12" y="396" width="3" height="1" fill="#444"/><rect x="13" y="406" width="1" height="1" fill="#444"/><rect x="13" y="415" width="1" height="1" fill="#444"/><rect x="13" y="425" width="1" height="1" fill="#444"/><rect x="13" y="434" width="1" height="1" fill="#444"/><text transform="translate(16.300 444.3) rotate(-90)" text-anchor="middle" fill="#3a3a3a">2</text><rect x="13" y="454" width="1" height="1" fill="#444"/><rect x="13" y="463" width="1" height="1" fill="#444"/><rect x="13" y="473" width="1" height="1" fill="#444"/><rect x="13" y="482" width="1" height="1" fill="#444"/><rect x="12" y="492" width="3" height="1" fill="#444"/><rect x="13" y="502" width="1" height="1" fill="#444"/><rect x="13" y="511" width="1" height="1" fill="#444"/><rect x="13" y="521" width="1" height="1" fill="#444"/><rect x="13" y="530" width="1" height="1" fill="#444"/><text transform="translate(16.300 540.3) rotate(-90)" text-anchor="middle" fill="#3a3a3a">3</text><rect x="13" y="550" width="1" height="1" fill="#444"/><rect x="13" y="559" width="1" height="1" fill="#444"/><rect x="13" y="569" width="1" height="1" fill="#444"/><rect x="13" y="578" width="1" height="1" fill="#444"/><rect x="12" y="588" width="3" height="1" fill="#444"/><rect x="13" y="598" width="1" height="1" fill="#444"/><rect x="13" y="607" width="1" height="1" fill="#444"/><rect x="13" y="617" width="1" height="1" fill="#444"/><rect x="13" y="626" width="1" height="1" fill="#444"/><text transform="translate(16.300 636.3) rotate(-90)" text-anchor="middle" fill="#3a3a3a">4</text><rect x="13" y="646" width="1" height="1" fill="#444"/><rect x="13" y="655" width="1" height="1" fill="#444"/><rect x="13" y="665" width="1" height="1" fill="#444"/><rect x="13" y="674" width="1" height="1" fill="#444"/><rect x="12" y="684" width="3" height="1" fill="#444"/><rect x="13" y="694" width="1" height="1" fill="#444"/><rect x="13" y="703" width="1" height="1" fill="#444"/><rect x="13" y="713" width="1" height="1" fill="#444"/><rect x="13" y="722" width="1" height="1" fill="#444"/><text transform="translate(16.300 732.3) rotate(-90)" text-anchor="middle" fill="#3a3a3a">5</text><rect x="13" y="742" width="1" height="1" fill="#444"/><rect x="13" y="751" width="1" height="1" fill="#444"/><rect x="13" y="761" width="1" height="1" fill="#444"/><rect x="13" y="770" width="1" height="1" fill="#444"/><rect x="12" y="780" width="3" height="1" fill="#444"/><rect x="13" y="790" width="1" height="1" fill="#444"/><rect x="13" y="799" width="1" height="1" fill="#444"/><rect x="13" y="809" width="1" height="1" fill="#444"/><rect x="13" y="818" width="1" height="1" fill="#444"/><text transform="translate(16.300 828.3) rotate(-90)" text-anchor="middle" fill="#3a3a3a">6</text><rect x="13" y="838" width="1" height="1" fill="#444"/><rect x="13" y="847" width="1" height="1" fill="#444"/><rect x="13" y="857" width="1" height="1" fill="#444"/><rect x="13" y="866" width="1" height="1" fill="#444"/><rect x="12" y="876" width="3" height="1" fill="#444"/><rect x="13" y="886" width="1" height="1" fill="#444"/><rect x="13" y="895" width="1" height="1" fill="#444"/><rect x="13" y="905" width="1" height="1" fill="#444"/><rect x="13" y="914" width="1" height="1" fill="#444"/></svg>
<div id="view"><div id="page"><div id="doctext">This <span style="margin-left:1.700px">is</span> <span style="margin-left:.8px">a</span> <span style="margin-left:-.5px;letter-spacing:-.4px">test.</span></div>
<div class="abs" style="left:740px;top:63px;width:1px;height:13px;background:#a6a6a6"></div><div class="abs" style="left:740px;top:75px;width:14px;height:1px;background:#a6a6a6"></div>
<div class="abs" style="left:62px;top:75px;width:14px;height:1px;background:#a6a6a6"></div><div class="abs" style="left:75px;top:63px;width:1px;height:13px;background:#a6a6a6"></div>
</div></div>
<div id="vsb" class="abs" style="left:1265px;top:2px;width:13px;height:770px;">
<div class="abs" style="left:0;top:0;width:13px;height:770px;box-sizing:border-box;border:1px solid #a8a8a8;border-radius:6.500px;background:#f0f0f0;"></div>
<div class="abs" style="left:0;top:12px;width:13px;height:746px;box-sizing:border-box;border:1px solid #a8a8a8;border-radius:6.500px;background:linear-gradient(90deg,#c8c8c8,#d4d4d4 55%,#dbdbdb);"></div>
<div class="abs" style="left:3.500px;top:6px;border-left:3px solid transparent;border-right:3px solid transparent;border-bottom:3.300px solid #555;width:0;height:0"></div>
<div class="abs" style="left:3.500px;top:760.700px;border-left:3px solid transparent;border-right:3px solid transparent;border-top:3.300px solid #555;width:0;height:0"></div>
<div class="abs" style="left:0;top:12px;width:13px;height:513px;box-sizing:border-box;border:1px solid #9c9c9c;border-radius:6.500px;background:linear-gradient(90deg,#fbfbfb,#f0f0f0 45%,#d9d9d9);"></div>
</div>
<svg style="left:1266px;top:772.5px" width="11" height="11" viewBox="0 0 11 11"><circle cx="5.500" cy="5.500" r="5" fill="url(#gnav)" stroke="#8f8f8f" stroke-width="1"/><path d="M5.400 3.300l1.600 2h-3.200zM5.400 5l2.100 2.500h-4.200z" fill="#1a1a1a"/></svg>
<svg style="left:1266px;top:786.0px" width="11" height="11" viewBox="0 0 11 11"><circle cx="5.500" cy="5.500" r="5" fill="url(#gnav)" stroke="#8f8f8f" stroke-width="1"/><path d="M3.900 7.500c.3-2.200 1.700-3.600 4.200-3.900v3.900h-1.400c0-.8.100-1.400.5-2c-.9.300-1.600 1-1.900 2z" fill="#2f5f99"/><rect x="6.600" y="6" width="1.500" height="1.500" fill="#7aa6d6"/></svg>
<svg style="left:1266px;top:799.0px" width="11" height="11" viewBox="0 0 11 11"><circle cx="5.500" cy="5.500" r="5" fill="url(#gnav)" stroke="#8f8f8f" stroke-width="1"/><path d="M5.400 7.800l1.600-2h-3.200zM5.400 6.100l2.100-2.500h-4.200z" fill="#1a1a1a"/></svg>
<svg width="0" height="0" style="left:0;top:0"><defs><linearGradient id="gnav" x1="0" y1="0" x2="0" y2="1"><stop offset="0" stop-color="#f6f6f6"/><stop offset="1" stop-color="#d6d6d6"/></linearGradient></defs></svg>
</div>
<div id="status">
  <span class="t" style="left:10px">Page 1 / 1</span>
  <span class="sep" style="left:199px"></span>
  <span class="t" style="left:205px;letter-spacing:-.15px">Default</span>
  <span class="sep" style="left:382px"></span>
  <span class="t" style="left:450.500px;letter-spacing:.18px">English (USA)</span>
  <span class="sep" style="left:605px"></span>
  <span class="t" style="left:609.500px;letter-spacing:.27px">INSRT</span>
  <span class="sep" style="left:654px"></span>
  <span class="t" style="left:659px">STD</span>
  <span class="sep" style="left:691px"></span>
  <svg style="left:696px;top:6px" width="10" height="11" viewBox="0 0 10 11">
    <path d="M.5 .5h6l3 3v7h-9z" fill="#fff" stroke="#8a8a8a" stroke-width="1"/>
    <path d="M6.500 .5v3h3z" fill="#8a8a8a"/>
    <path d="M4.200 3.800v5M2 6.300h4.600M2.600 4.600l3.400 3.400M5.900 4.600L2.600 8" stroke="#f57900" stroke-width="1"/>
  </svg>
  <span class="sep" style="left:713px"></span>
  <span class="sep" style="left:742px"></span>
  <span class="sep" style="left:1012px"></span>
  <!-- view layout icons -->
  <svg style="left:1019px;top:6px" width="10" height="11" viewBox="0 0 10 11">
    <path d="M.5 .5h5.600l3 3v7H.5z" fill="#fcfcfc" stroke="#8c8c8c" stroke-width="1"/><path d="M6 .5v3.200h3.200" fill="#e2e2e2" stroke="#8c8c8c" stroke-width=".8"/>
  </svg>
  <svg style="left:1034px;top:6px" width="20" height="11" viewBox="0 0 20 11">
    <path d="M.6 .6h5.600l2.600 2.600v7.200H.6z" fill="#c8daf2" stroke="#2a5db0" stroke-width="1.200"/><path d="M6 .6v2.800h2.800" fill="#eef3fa" stroke="#2a5db0" stroke-width=".8"/>
    <path d="M10.600 .6h5.600l2.600 2.600v7.200h-8.200z" fill="#c8daf2" stroke="#2a5db0" stroke-width="1.200"/><path d="M16 .6v2.800h2.800" fill="#eef3fa" stroke="#2a5db0" stroke-width=".8"/>
  </svg>
  <svg style="left:1059px;top:6px" width="18" height="11" viewBox="0 0 18 11">
    <path d="M.5 10.500V3.200L3 .6h5.800v9.900z" fill="#fafafa" stroke="#8c8c8c" stroke-width="1"/><path d="M8.800 10.500V.6h5.400l2.800 2.800v7.100z" fill="#fafafa" stroke="#8c8c8c" stroke-width="1"/>
    <path d="M.5 3.400h2.700V.6M14.200 .6v2.800H17" fill="none" stroke="#8c8c8c" stroke-width=".8"/>
  </svg>
  <span class="sep" style="left:1088px"></span>
  <!-- zoom slider -->
  <svg style="left:1093px;top:5px" width="130" height="14" viewBox="0 0 130 14">
    <circle cx="5.500" cy="7" r="5" fill="#dfe8f3" stroke="#46628a" stroke-width="1"/><path d="M3 7h5" stroke="#1f3f6e" stroke-width="1.400"/>
    <path d="M17 6.500h96" stroke="#8b8b8b" stroke-width="1"/>
    <path d="M45.500 1v11" stroke="#8b8b8b" stroke-width="1"/>
    <path d="M64 2l2.700 2.500a3.800 3.800 0 1 1-5.400 0z" fill="#6283a8" stroke="#3c556f" stroke-width=".9"/>
    <circle cx="123.500" cy="7" r="5" fill="#dfe8f3" stroke="#46628a" stroke-width="1"/><path d="M121 7h5M123.500 4.500v5" stroke="#1f3f6e" stroke-width="1.400"/>
  </svg>
  <span class="sep" style="left:1230px"></span>
  <span class="t" style="left:1235px">100%</span>
</div>

<div id="menubar">
  <div id="viewsel"></div>
  <span class="mi" style="left:5.500px;letter-spacing:.8px"><u>F</u>ile</span>
  <span class="mi" style="left:40.200px;letter-spacing:.35px"><u>E</u>dit</span>
  <span class="mi" style="left:77.500px;letter-spacing:.55px"><u>V</u>iew</span>
  <span class="mi" style="left:121.300px;letter-spacing:.1px"><u>I</u>nsert</span>
  <span class="mi" style="left:170.600px;letter-spacing:.15px">F<u>o</u>rmat</span>
  <span class="mi" style="left:229.200px;letter-spacing:.75px">T<u>a</u>ble</span>
  <span class="mi" style="left:277.200px;letter-spacing:1px"><u>T</u>ools</span>
  <span class="mi" style="left:323px;letter-spacing:.2px"><u>W</u>indow</span>
  <span class="mi" style="left:387.300px;letter-spacing:.8px"><u>H</u>elp</span>
  <svg style="left:1263px;top:8px" width="10" height="10" viewBox="0 0 10 10"><defs><linearGradient id="gx" x1="0" y1="0" x2="0" y2="1"><stop offset="0" stop-color="#8297ab"/><stop offset="1" stop-color="#3d4f63"/></linearGradient></defs><path d="M1.400 1.400l7 7M8.400 1.400l-7 7" fill="none" stroke="url(#gx)" stroke-width="1.800"/></svg>
</div>

<div id="menu">
  <div class="it" style="top:3px"><svg class="ck" width="12" height="12" viewBox="0 0 12 12"><circle cx="6.500" cy="5.400" r="3.800" fill="#dfdbd2"/></svg><span class="l"><u>P</u>rint Layout</span></div>
  <div class="it" style="top:22px"><span class="l"><u>W</u>eb Layout</span></div>
  <div class="sepm" style="top:45px"></div>
  <div class="it" style="top:49px"><span class="l" style="letter-spacing:0.45px"><u>T</u>oolbars</span><svg style="left:260.800px;top:7px" width="4" height="6" viewBox="0 0 4 6"><path d="M0 0L3.500 3 0 6z" fill="#dfdbd2"/></svg></div>
  <div class="it" style="top:68px"><svg class="ck" width="14" height="12" viewBox="0 0 14 12"><use href="#chk" fill="#dfdbd2"/></svg><span class="l">Status <u>B</u>ar</span></div>
  <div class="it" style="top:87px"><svg class="ck" width="14" height="12" viewBox="0 0 14 12"><use href="#chk" fill="#dfdbd2"/></svg><span class="l" style="letter-spacing:-0.09px">Input M<u>e</u>thod Status</span></div>
  <div class="it" style="top:106px"><svg class="ck" width="14" height="12" viewBox="0 0 14 12"><use href="#chk" fill="#dfdbd2"/></svg><span class="l" style="letter-spacing:0.15px"><u>R</u>uler</span></div>
  <div class="sepm" style="top:129px"></div>
  <div class="it hl" style="top:133px"><svg class="ck" width="14" height="12" viewBox="0 0 14 12"><use href="#chk" fill="#fff"/></svg><span class="l" style="letter-spacing:0.22px">Te<u>x</u>t Boundaries</span></div>
  <div class="it" style="top:152px"><svg class="ck" width="14" height="12" viewBox="0 0 14 12"><use href="#chk" fill="#dfdbd2"/></svg><span class="l" style="letter-spacing:0.1px">Fie<u>l</u>d Shadings</span><span class="r">Ctrl+F8</span></div>
  <div class="it" style="top:171px"><span class="l" style="letter-spacing:0.2px"><u>F</u>ield Names</span><span class="r">Ctrl+F9</span></div>
  <div class="it" style="top:190px"><span class="l"><u>N</u>onprinting Characters</span><span class="r">Ctrl+F10</span></div>
  <div class="it" style="top:209px"><svg class="ck" width="14" height="12" viewBox="0 0 14 12"><use href="#chk" fill="#dfdbd2"/></svg><span class="l"><u>H</u>idden Paragraphs</span></div>
  <div class="it dis" style="top:228px"><span class="l" style="letter-spacing:0.1px"><u>C</u>omments</span></div>
  <div class="sepm" style="top:251px"></div>
  <div class="it" style="top:255px"><span class="l"><u>D</u>ata Sources</span><span class="r">F4</span></div>
  <div class="it" style="top:274px"><span class="l" style="letter-spacing:0.08px">Na<u>v</u>igator</span><span class="r">F5</span></div>
  <div class="sepm" style="top:297px"></div>
  <div class="it" style="top:301px"><span class="l" style="letter-spacing:0.15px">F<u>u</u>ll Screen</span><span class="r" style="letter-spacing:.17px;right:10.300px">Ctrl+Shift+J</span></div>
  <div class="it" style="top:320px"><span class="l" style="letter-spacing:0.2px"><u>Z</u>oom...</span></div>
</div>
<svg width="0" height="0" style="left:0;top:0"><defs><path id="chk" d="M.2 5.700L1.900 4.200 5.500 7.300 12.700 -.2 13.700 .7 5 11.100z"/></defs></svg>
<!-- mouse pointer -->
<svg style="left:252px;top:170px" width="15" height="22" viewBox="0 0 15 22">
  <path d="M1.500 1.800v16.400l3.800-3.600 2.600 5.800 2.400-1-2.600-5.600h5.200z" fill="#fff" stroke="#000" stroke-width="1.300" stroke-linejoin="round"/>
</svg>

</body>
</html>
